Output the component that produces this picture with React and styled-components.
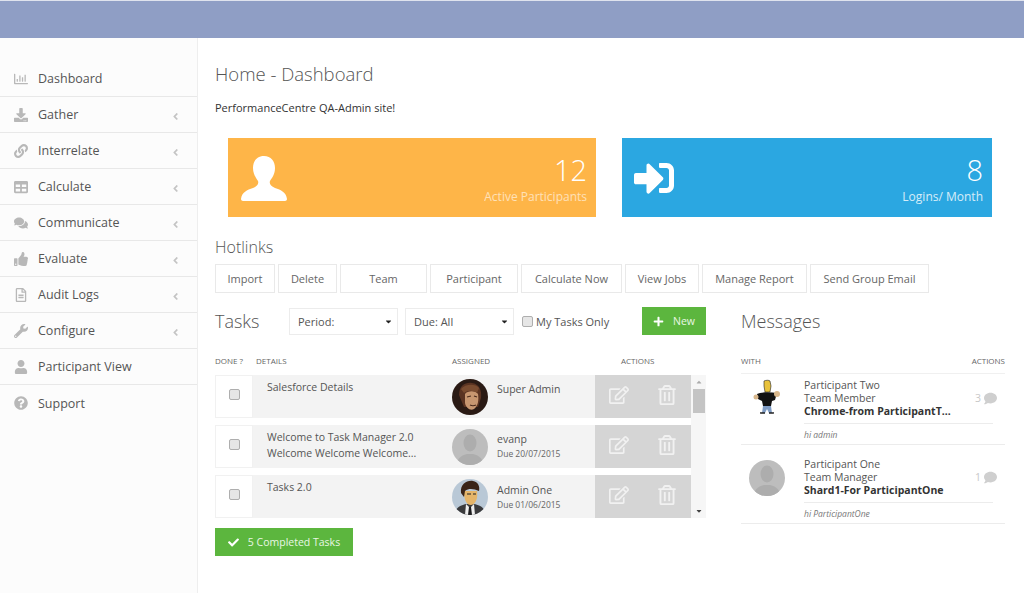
import styled, { createGlobalStyle } from "styled-components";
import {
  FaAngleLeft, FaCaretDown, FaCaretUp, FaCheck, FaComment, FaComments, FaDownload, FaLink,
  FaPlus, FaQuestionCircle, FaRegChartBar, FaRegEdit, FaRegFileAlt, FaRegTrashAlt,
  FaSignInAlt, FaTable, FaThumbsUp, FaUser, FaWrench,
} from "react-icons/fa";

const GlobalStyle = createGlobalStyle`
  html, body { margin: 0; padding: 0; background: #fff; }
  body { font-family: "Open Sans", "Liberation Sans", sans-serif; color: #555; overflow: hidden; }
  * { box-sizing: border-box; }
`;

const Page = styled.div`
  width: 1024px;
  height: 593px;
  display: flex;
  flex-direction: column;
`;

const TopBar = styled.header`
  height: 38px;
  flex: none;
  background: #8f9ec5;
  border-top: 1px solid #dfe3ee;
`;

const Body = styled.div`
  flex: 1;
  display: flex;
  min-height: 0;
`;

const Sidebar = styled.nav`
  width: 198px;
  flex: none;
  padding-top: 23px;
  background: #fcfcfc;
  border-right: 1px solid #eeeeee;
`;

const MenuItem = styled.div`
  height: 36px;
  display: flex;
  align-items: center;
  padding: 0 16px 0 14px;
  font-size: 12.5px;
  color: #555;
  border-bottom: ${(p) => (p.$last ? "none" : "1px solid #e8e8e8")};
`;

const MenuIcon = styled.span`
  width: 24px;
  display: flex;
  font-size: 14px;
  color: #b8b8b8;
`;

const MenuLabel = styled.span`
  flex: 1;
`;

const Chevron = styled(FaAngleLeft)`
  color: #c4c4c4;
  font-size: 11px;
  margin-top: 3px;
`;

const Main = styled.main`
  flex: 1;
  padding: 24px 0 0 17px;
  min-width: 0;
`;

const Title = styled.h1`
  margin: 0;
  font-size: 18.5px;
  font-weight: 300;
  line-height: 24px;
  color: #555;
`;

const Intro = styled.p`
  margin: 14px 0 0;
  font-size: 11px;
  line-height: 16px;
  color: #333;
`;

const Cards = styled.div`
  display: flex;
  gap: 26px;
  margin: 22px 0 0 13px;
`;

const Card = styled.div`
  height: 79px;
  width: ${(p) => p.$width}px;
  display: flex;
  justify-content: space-between;
  align-items: center;
  padding: 0 9px 0 12px;
  background: ${(p) => p.$bg};
  color: #fff;
`;

const CardStats = styled.div`
  text-align: right;
`;

const CardNumber = styled.div`
  font-size: 29px;
  font-weight: 300;
  line-height: 36px;
  margin-top: 3px;
`;

const CardLabel = styled.div`
  font-size: 12px;
  line-height: 18px;
  opacity: ${(p) => p.$dim};
`;

const SectionTitle = styled.h2`
  margin: 0;
  font-size: ${(p) => p.$size}px;
  font-weight: 300;
  color: #555;
  line-height: ${(p) => p.$line}px;
`;

const HotlinkTitle = styled(SectionTitle)`
  margin-top: 19px;
`;

const Hotlinks = styled.div`
  display: flex;
  gap: 3px;
  margin-top: 6px;
`;

const Hotlink = styled.a`
  width: ${(p) => p.$width}px;
  height: 29px;
  display: flex;
  align-items: center;
  justify-content: center;
  font-size: 11px;
  color: #666;
  background: #fff;
  border: 1px solid #e9e9e9;
`;

const Columns = styled.div`
  display: flex;
  gap: 35px;
  margin-top: 14px;
`;

const TaskPanel = styled.section`
  width: 491px;
  flex: none;
`;

const Toolbar = styled.div`
  height: 28px;
  display: flex;
  align-items: center;
`;

const TasksTitle = styled(SectionTitle)`
  width: 74px;
`;

const SelectBox = styled.div`
  position: relative;
  width: 109px;
  height: 27px;
  margin-right: 7px;
`;

const Select = styled.select`
  width: 100%;
  height: 100%;
  padding: 0 0 0 8px;
  appearance: none;
  font: 11px "Open Sans", sans-serif;
  color: #555;
  background: #fff;
  border: 1px solid #ececec;
  border-radius: 0;
`;

const SelectCaret = styled(FaCaretDown)`
  position: absolute;
  right: 5px;
  top: 9px;
  font-size: 9px;
  color: #222;
`;

const Check = styled.input.attrs({ type: "checkbox" })`
  appearance: none;
  width: 11px;
  height: 11px;
  margin: 0;
  flex: none;
  background: #e6e6e6;
  border: 1px solid #aeaeae;
  border-radius: 2px;
`;

const OnlyLabel = styled.label`
  display: flex;
  align-items: center;
  gap: 3px;
  margin-left: 1px;
  width: 120px;
  font-size: 11px;
  color: #555;
`;

const GreenButton = styled.button`
  height: 28px;
  width: ${(p) => p.$width}px;
  display: flex;
  align-items: center;
  justify-content: center;
  gap: ${(p) => p.$gap}px;
  padding: 0;
  border: 0;
  background: #5cb63e;
  color: #e9f6e4;
  font: 10.5px "Open Sans", sans-serif;
  svg { color: #fff; font-size: 11px; }
`;

const HeadRow = styled.div`
  display: grid;
  grid-template-columns: ${(p) => p.$cols};
  margin-top: 20px;
  height: 12px;
  font-size: 8px;
  line-height: 12px;
  color: #666;
  text-transform: uppercase;
`;

const TaskArea = styled.div`
  display: flex;
  margin-top: 8px;
`;

const TaskRows = styled.div`
  width: 476px;
  display: flex;
  flex-direction: column;
  gap: 7px;
`;

const TaskRow = styled.div`
  height: 43px;
  display: flex;
  background: #f3f3f3;
`;

const DoneCell = styled.div`
  width: 38px;
  display: flex;
  align-items: center;
  justify-content: center;
  background: #fff;
  border: 1px solid #f1f1f1;
  padding-bottom: 4px;
`;

const DetailCell = styled.div`
  width: 199px;
  padding: 4px 0 0 14px;
  font-size: 10.5px;
  line-height: 16px;
  color: #555;
`;

const AssignedCell = styled.div`
  flex: 1;
  display: flex;
  align-items: center;
  gap: 9px;
`;

const Avatar = styled.svg`
  width: 36px;
  height: 36px;
  flex: none;
  border-radius: 50%;
`;

const Person = styled.div`
  align-self: flex-start;
  padding-top: ${(p) => p.$top}px;
`;

const PersonName = styled.div`
  font-size: 10.5px;
  line-height: 16px;
  color: #555;
`;

const DueDate = styled.div`
  font-size: 8.5px;
  line-height: 14px;
  color: #666;
`;

const ActionCell = styled.div`
  width: 96px;
  display: flex;
  align-items: center;
  justify-content: space-between;
  padding: 0 14px 3px 14px;
  background: #d5d5d5;
  color: #f1f1f1;
  font-size: 20px;
`;

const Scrollbar = styled.div`
  width: 15px;
  margin-left: 0;
  display: flex;
  flex-direction: column;
  align-items: center;
  background: #f6f6f6;
  font-size: 8px;
  color: #555;
`;

const ArrowSlot = styled.div`
  height: 14px;
  display: flex;
  align-items: center;
  color: ${(p) => p.$color};
`;

const Thumb = styled.div`
  width: 12px;
  height: 24px;
  background: #c4c4c4;
`;

const ScrollSpace = styled.div`
  flex: 1;
`;

const CompletedRow = styled.div`
  margin-top: 10px;
`;

const MessagePanel = styled.section`
  width: 264px;
  flex: none;
`;

const MessagesTitle = styled(SectionTitle)`
  padding-top: 0;
`;

const MessageList = styled.div`
  margin-top: 6px;
  border-top: 1px solid #f0f0f0;
`;

const Message = styled.article`
  padding-top: ${(p) => p.$top}px;
  margin-bottom: 7px;
  border-bottom: 1px solid #ececec;
  &:last-child { margin-bottom: 0; }
`;

const MessageTop = styled.div`
  display: flex;
  align-items: flex-start;
`;

const MessageAvatar = styled.div`
  width: 63px;
  flex: none;
  padding-left: 8px;
  display: flex;
  margin-top: ${(p) => p.$top}px;
`;

const MessageText = styled.div`
  width: 189px;
  font-size: 10.5px;
  line-height: 13px;
  color: #555;
`;

const MessageSubject = styled.div`
  width: 150px;
  font-weight: 700;
  color: #333;
  white-space: nowrap;
`;

const Count = styled.div`
  display: flex;
  align-items: center;
  gap: 3px;
  margin: 13px 0 0 -18px;
  font-size: 10.5px;
  line-height: 13px;
  color: #c8c8c8;
  svg { font-size: 13px; color: #cfcfcf; }
`;

const Preview = styled.div`
  margin: 5px 0 0 63px;
  width: 189px;
  padding: 5px 0 3px;
  font-size: 8.5px;
  line-height: 12px;
  font-style: italic;
  color: #777;
  border-top: 1px solid #ececec;
`;

const Silhouette = styled.svg`
  width: 48px;
  height: 48px;
  fill: #fff;
`;

const LoginIcon = styled(FaSignInAlt)`
  width: 40px;
  height: 40px;
  margin-left: 0;
`;

const menu = [
  ["Dashboard", FaRegChartBar, false],
  ["Gather", FaDownload, true],
  ["Interrelate", FaLink, true],
  ["Calculate", FaTable, true],
  ["Communicate", FaComments, true],
  ["Evaluate", FaThumbsUp, true],
  ["Audit Logs", FaRegFileAlt, true],
  ["Configure", FaWrench, true],
  ["Participant View", FaUser, false],
  ["Support", FaQuestionCircle, false],
];

const hotlinks = [
  ["Import", 60], ["Delete", 59], ["Team", 87], ["Participant", 88], ["Calculate Now", 101],
  ["View Jobs", 74], ["Manage Report", 105], ["Send Group Email", 119],
];

const GreyAvatar = () => (
  <Avatar viewBox="0 0 36 36">
    <rect width="36" height="36" fill="#bdbdbd" />
    <ellipse cx="18" cy="14" rx="6.5" ry="8.5" fill="#adadad" />
    <path d="M5 36c0-8 6-10 10-11h6c4 1 10 3 10 11z" fill="#adadad" />
  </Avatar>
);

const SuperAdminAvatar = () => (
  <Avatar viewBox="0 0 36 36">
    <rect width="36" height="36" fill="#2a1a14" />
    <path d="M7 16C7 6 14 3 20 4c7 1 10 7 9 15l-3 9H12z" fill="#5a3322" />
    <path d="M13 15c2-3 10-4 13 0 1 6 0 12-4 15-4 2-8-1-9-6z" fill="#c79670" />
    <path d="M15 18l4-1M22 17l3 1M18 26c2 1 4 1 6 0" stroke="#4a2a1c" strokeWidth="1.2" fill="none" />
    <path d="M9 10c4-5 14-6 18-1l-2 5c-4-3-9-3-13 0z" fill="#7a4c30" />
  </Avatar>
);

const AdminOneAvatar = () => (
  <Avatar viewBox="0 0 36 36">
    <rect width="36" height="36" fill="#b9c8d6" />
    <path d="M2 36c1-8 8-10 12-11h8c5 1 11 3 12 11z" fill="#3a3a3c" />
    <path d="M14 25l4 4 4-4 1 11H13z" fill="#eee" />
    <path d="M17 28h2l1 8h-4z" fill="#1c1c1e" />
    <path d="M12 12h13c1 7-1 13-6 14-5 0-7-6-7-14z" fill="#e5b56a" />
    <path d="M9 14C8 5 15 1 21 2c5 1 7 5 6 10-5-2-10-3-14 0l-1 6z" fill="#3a2418" />
    <path d="M15 15h4M21 15h3" stroke="#222" strokeWidth="1.2" />
  </Avatar>
);

const BravoAvatar = () => (
  <Avatar viewBox="0 0 36 36">
    <rect width="36" height="36" fill="#fff" />
    <path d="M15 2c2-1 5-1 6 0l1 5-1 6h-5l-1-6z" fill="#e8c23c" stroke="#222" strokeWidth=".6" />
    <path d="M8 15c4-2 13-2 20-1l-2 7-3 1-1 5h-8l-1-5-4-2z" fill="#111" />
    <circle cx="7" cy="18" r="2.5" fill="#d8b78c" />
    <circle cx="28" cy="15" r="3" fill="#d8b78c" />
    <path d="M14 27h8l1 7h-3l-2-4-2 4h-3z" fill="#7f9cc4" />
    <path d="M11 34h5M20 34h5" stroke="#222" strokeWidth="1.5" />
  </Avatar>
);

const tasks = [
  { done: "Salesforce Details", avatar: <SuperAdminAvatar />, name: "Super Admin", top: 6 },
  {
    done: "Welcome to Task Manager 2.0",
    more: "Welcome Welcome Welcome...",
    avatar: <GreyAvatar />,
    name: "evanp",
    due: "Due 20/07/2015",
    top: 6,
  },
  { done: "Tasks 2.0", avatar: <AdminOneAvatar />, name: "Admin One", due: "Due 01/06/2015", top: 7 },
];

const App = () => {
  return (
    <Page>
      <GlobalStyle />
      <TopBar />
      <Body>
        <Sidebar>
          {menu.map(([label, Icon, arrow], i) => (
            <MenuItem key={label} $last={i === menu.length - 1}>
              <MenuIcon><Icon /></MenuIcon>
              <MenuLabel>{label}</MenuLabel>
              {arrow && <Chevron />}
            </MenuItem>
          ))}
        </Sidebar>
        <Main>
          <Title>Home - Dashboard</Title>
          <Intro>PerformanceCentre QA-Admin site!</Intro>
          <Cards>
            <Card $width={368} $bg="#feb548">
              <Silhouette viewBox="0 0 48 48">
                <path d="M24 2c7 0 11 5 11 12 0 6-3 10-5 13-1 3 1 5 5 7 6 2 11 4 12 11 0 1-1 2-2 2H3c-1 0-2-1-2-2 1-7 6-9 12-11 4-2 6-4 5-7-2-3-5-7-5-13C13 7 17 2 24 2z" />
              </Silhouette>
              <CardStats>
                <CardNumber>12</CardNumber>
                <CardLabel $dim={0.6}>Active Participants</CardLabel>
              </CardStats>
            </Card>
            <Card $width={370} $bg="#2ba7e1">
              <LoginIcon />
              <CardStats>
                <CardNumber>8</CardNumber>
                <CardLabel $dim={0.8}>Logins/ Month</CardLabel>
              </CardStats>
            </Card>
          </Cards>
          <HotlinkTitle $size={16} $line={22}>Hotlinks</HotlinkTitle>
          <Hotlinks>
            {hotlinks.map(([label, width]) => (
              <Hotlink key={label} $width={width}>{label}</Hotlink>
            ))}
          </Hotlinks>
          <Columns>
            <TaskPanel>
              <Toolbar>
                <TasksTitle $size={18} $line={28}>Tasks</TasksTitle>
                <SelectBox>
                  <Select defaultValue="period"><option value="period">Period:</option></Select>
                  <SelectCaret />
                </SelectBox>
                <SelectBox>
                  <Select defaultValue="all"><option value="all">Due: All</option></Select>
                  <SelectCaret />
                </SelectBox>
                <OnlyLabel><Check />My Tasks Only</OnlyLabel>
                <GreenButton $width={64} $gap={9}><FaPlus />New</GreenButton>
              </Toolbar>
              <HeadRow $cols="41px 196px 169px 1fr">
                <span>Done ?</span>
                <span>Details</span>
                <span>Assigned</span>
                <span>Actions</span>
              </HeadRow>
              <TaskArea>
                <TaskRows>
                  {tasks.map((t) => (
                    <TaskRow key={t.name}>
                      <DoneCell><Check /></DoneCell>
                      <DetailCell>
                        {t.done}
                        {t.more && <div>{t.more}</div>}
                      </DetailCell>
                      <AssignedCell>
                        {t.avatar}
                        <Person $top={t.top}>
                          <PersonName>{t.name}</PersonName>
                          {t.due && <DueDate>{t.due}</DueDate>}
                        </Person>
                      </AssignedCell>
                      <ActionCell><FaRegEdit /><FaRegTrashAlt /></ActionCell>
                    </TaskRow>
                  ))}
                </TaskRows>
                <Scrollbar>
                  <ArrowSlot $color="#aaa"><FaCaretUp /></ArrowSlot>
                  <Thumb />
                  <ScrollSpace />
                  <ArrowSlot $color="#444"><FaCaretDown /></ArrowSlot>
                </Scrollbar>
              </TaskArea>
              <CompletedRow>
                <GreenButton $width={138} $gap={9}><FaCheck />5 Completed Tasks</GreenButton>
              </CompletedRow>
            </TaskPanel>
            <MessagePanel>
              <MessagesTitle $size={18} $line={28}>Messages</MessagesTitle>
              <HeadRow $cols="1fr auto">
                <span>With</span>
                <span>Actions</span>
              </HeadRow>
              <MessageList>
                <Message $top={5}>
                  <MessageTop>
                    <MessageAvatar $top={0}><BravoAvatar /></MessageAvatar>
                    <MessageText>
                      Participant Two
                      <br />
                      Team Member
                      <MessageSubject>Chrome-from ParticipantT...</MessageSubject>
                    </MessageText>
                    <Count>3<FaComment /></Count>
                  </MessageTop>
                  <Preview>hi admin</Preview>
                </Message>
                <Message $top={6}>
                  <MessageTop>
                    <MessageAvatar $top={2}><GreyAvatar /></MessageAvatar>
                    <MessageText>
                      Participant One
                      <br />
                      Team Manager
                      <MessageSubject>Shard1-For ParticipantOne</MessageSubject>
                    </MessageText>
                    <Count>1<FaComment /></Count>
                  </MessageTop>
                  <Preview>hi ParticipantOne</Preview>
                </Message>
              </MessageList>
            </MessagePanel>
          </Columns>
        </Main>
      </Body>
    </Page>
  );
};

export default App;
